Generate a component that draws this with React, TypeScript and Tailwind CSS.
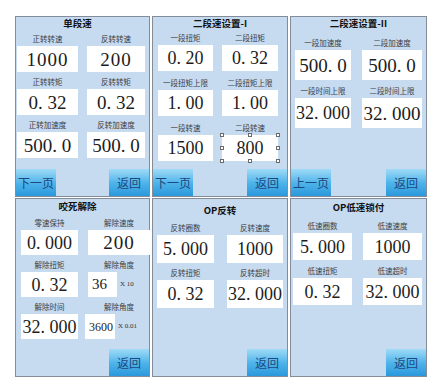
import React from 'react';

type Field = {
  label: string;
  value: string;
  suffix?: string;
  selected?: boolean;
  valueCls?: string;
  boxW?: string;
};

type PanelCfg = {
  title: string;
  titleCls: string;
  gridCls: string;
  boxCls: string;
  gapCls: string;
  rows: Field[][];
  buttons: [string | null, string];
};

const panels: PanelCfg[] = [
  {
    title: '单段速',
    titleCls: 'h-[15px] pr-[10px]',
    gridCls: 'grid-cols-[61px_58px] gap-x-[9px] pl-[1px]',
    boxCls: 'h-[26px]',
    gapCls: 'mt-[3px]',
    rows: [
      [
        { label: '正转转速', value: '1000', valueCls: 'text-[19px] tracking-[1px]' },
        { label: '反转转速', value: '200', valueCls: 'text-[19px] tracking-[1px]' },
      ],
      [
        { label: '正转转矩', value: '0. 32', valueCls: 'text-[19px]' },
        { label: '反转转矩', value: '0. 32', valueCls: 'text-[19px]' },
      ],
      [
        { label: '正转加速度', value: '500. 0', valueCls: 'text-[19px]' },
        { label: '反转加速度', value: '500. 0', valueCls: 'text-[19px]' },
      ],
    ],
    buttons: ['下一页', '返回'],
  },
  {
    title: '二段速设置-I',
    titleCls: 'h-[14px]',
    gridCls: 'grid-cols-[55px_56px] gap-x-[9px] pl-[5px]',
    boxCls: 'h-[26px]',
    gapCls: 'mt-[5px]',
    rows: [
      [
        { label: '一段扭矩', value: '0. 20' },
        { label: '二段扭矩', value: '0. 32' },
      ],
      [
        { label: '一段扭矩上限', value: '1. 00' },
        { label: '二段扭矩上限', value: '1. 00' },
      ],
      [
        { label: '一段转速', value: '1500' },
        { label: '二段转速', value: '800', selected: true },
      ],
    ],
    buttons: ['下一页', '返回'],
  },
  {
    title: '二段速设置-II',
    titleCls: 'h-[19px]',
    gridCls: 'grid-cols-[56px_60px] gap-x-[11px] pl-[4px]',
    boxCls: 'h-[30px]',
    gapCls: 'mt-[4px]',
    rows: [
      [
        { label: '一段加速度', value: '500. 0', valueCls: 'text-[19px]' },
        { label: '二段加速度', value: '500. 0', valueCls: 'text-[19px]' },
      ],
      [
        { label: '一段时间上限', value: '32. 000' },
        { label: '二段时间上限', value: '32. 000', valueCls: 'text-[19px]' },
      ],
    ],
    buttons: ['上一页', '返回'],
  },
  {
    title: '咬死解除',
    titleCls: 'h-[17px] pt-[1px] pr-[10px]',
    gridCls: 'grid-cols-[57px_62px] gap-x-[10px] pl-[5px]',
    boxCls: 'h-[25px]',
    gapCls: 'mt-[3px]',
    rows: [
      [
        { label: '零速保持', value: '0. 000' },
        { label: '解除速度', value: '200', valueCls: 'text-[19px] tracking-[1px]' },
      ],
      [
        { label: '解除扭矩', value: '0. 32' },
        { label: '解除角度', value: '36', suffix: 'X 10', boxW: 'w-[29px]', valueCls: 'text-[15px]' },
      ],
      [
        { label: '解除时间', value: '32. 000' },
        { label: '解除角度', value: '3600', suffix: 'X 0.01', boxW: 'w-[30px] -ml-[3px]', valueCls: 'text-[12px]' },
      ],
    ],
    buttons: [null, '返回'],
  },
  {
    title: 'OP反转',
    titleCls: 'h-[22px] pt-[5px]',
    gridCls: 'grid-cols-[57px_56px] gap-x-[13px] pl-[4px]',
    boxCls: 'h-[28px]',
    gapCls: 'mt-[3px]',
    rows: [
      [
        { label: '反转圈数', value: '5. 000' },
        { label: '反转速度', value: '1000' },
      ],
      [
        { label: '反转扭矩', value: '0. 32' },
        { label: '反转超时', value: '32. 000' },
      ],
    ],
    buttons: [null, '返回'],
  },
  {
    title: 'OP低速锁付',
    titleCls: 'h-[20px] pt-[2px]',
    gridCls: 'grid-cols-[59px_59px] gap-x-[11px] pl-[2px]',
    boxCls: 'h-[27px]',
    gapCls: 'mt-[4px]',
    rows: [
      [
        { label: '低速圈数', value: '5. 000' },
        { label: '低速速度', value: '1000' },
      ],
      [
        { label: '低速扭矩', value: '0. 32' },
        { label: '低速超时', value: '32. 000' },
      ],
    ],
    buttons: [null, '返回'],
  },
];

// little resize handles round the selected box
const Handles = () => {
  const pos = [
    'left-[-2px] top-[-2px]',
    'left-[calc(50%-2px)] top-[-2px]',
    'right-[-2px] top-[-2px]',
    'left-[-2px] top-[calc(50%-2px)]',
    'right-[-2px] top-[calc(50%-2px)]',
    'left-[-2px] bottom-[-2px]',
    'left-[calc(50%-2px)] bottom-[-2px]',
    'right-[-2px] bottom-[-2px]',
  ];
  return (
    <>
      {pos.map(p => (
        <span key={p} className={`absolute h-[4px] w-[4px] border border-[#6b6b6b] bg-white ${p}`} />
      ))}
    </>
  );
};

const ValueBox = ({ f, boxCls }: { f: Field; boxCls: string }) => {
  const text = (
    <span
      className={`whitespace-nowrap font-['Liberation_Serif',serif] leading-none text-[#1c1c1c] ${f.valueCls ?? 'text-[18px]'}`}
    >
      {f.value}
    </span>
  );

  if (f.suffix) {
    return (
      <div className="flex items-center">
        <div className={`flex items-center bg-white pl-[4px] ${boxCls} ${f.boxW}`}>{text}</div>
        <span className="ml-[3px] whitespace-nowrap font-['Liberation_Serif',serif] text-[7px] text-[#333]">
          {f.suffix}
        </span>
      </div>
    );
  }

  return (
    <div className={`relative flex items-center justify-center overflow-visible bg-white ${boxCls}`}>
      {text}
      {f.selected && <Handles />}
    </div>
  );
};

const PanelButton = ({ label, side }: { label: string; side: 'left' | 'right' }) => (
  <div
    className={`flex h-[27px] w-[40px] items-center justify-center bg-linear-to-b from-[#9edbf7] via-[#4fb5ea] to-[#2a98dc] text-[12px] leading-none text-[#1d477f] ${
      side === 'right' ? 'ml-auto' : ''
    }`}
  >
    {label}
  </div>
);

const Panel = ({ cfg }: { cfg: PanelCfg }) => (
  <div className="flex h-full w-full flex-col border border-[#838c98] bg-[#c6daf0]">
    <div className={`text-center text-[9.5px] font-bold leading-[12px] text-[#111] ${cfg.titleCls}`}>{cfg.title}</div>
    <div className={`grid ${cfg.gridCls}`}>
      {cfg.rows.map((row, i) => (
        <React.Fragment key={i}>
          {row.map((f, j) => (
            <div
              key={`l${j}`}
              className={`flex h-[14px] items-center justify-center whitespace-nowrap text-[7.5px] leading-none text-[#404040] ${
                i > 0 ? cfg.gapCls : ''
              }`}
            >
              {f.label}
            </div>
          ))}
          {row.map((f, j) => (
            <ValueBox key={`v${j}`} f={f} boxCls={cfg.boxCls} />
          ))}
        </React.Fragment>
      ))}
    </div>
    <div className="mt-auto flex">
      {cfg.buttons[0] && <PanelButton label={cfg.buttons[0]} side="left" />}
      <PanelButton label={cfg.buttons[1]} side="right" />
    </div>
  </div>
);

export default function App() {
  return (
    <div className="h-[388px] w-[433px] bg-white pl-[15px] pt-[16px] font-['Noto_Sans_CJK_SC',sans-serif]">
      <div className="grid grid-cols-[135px_136px_137px] grid-rows-[181px_179px] gap-x-[2px] gap-y-[1px]">
        {panels.map(p => (
          <Panel key={p.title} cfg={p} />
        ))}
      </div>
    </div>
  );
}
